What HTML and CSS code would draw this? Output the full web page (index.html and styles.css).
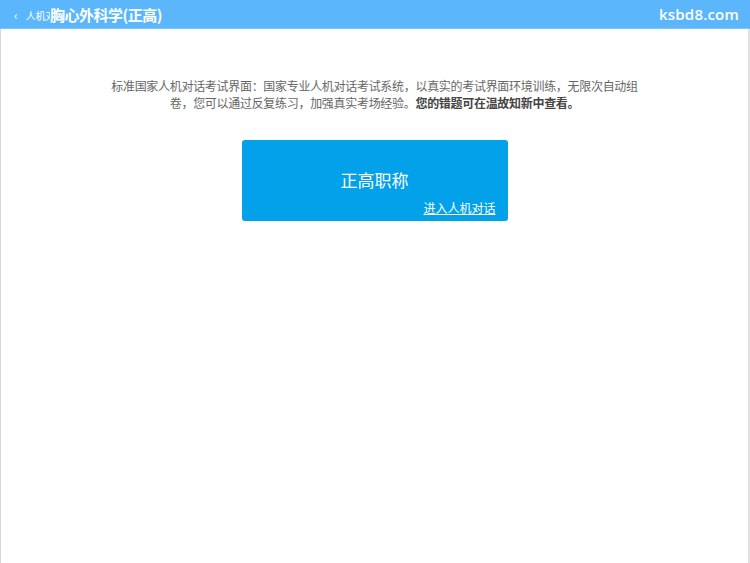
FILE: index.html
```html
<!DOCTYPE html>
<html lang="zh">
<head>
<meta charset="utf-8">
<title>胸心外科学(正高)</title>
<link rel="stylesheet" href="styles.css">
</head>
<body>
<div class="page">
  <header class="topbar">
    <div class="left">
      <span class="back"><span class="chev">‹</span>人机对</span><span class="title">胸心外科学(正高)</span>
    </div>
    <div class="site">ksbd8.com</div>
  </header>
  <main class="content">
    <p class="intro">标准国家人机对话考试界面：国家专业人机对话考试系统，以真实的考试界面环境训练，无限次自动组卷，您可以通过反复练习，加强真实考场经验。<b>您的错题可在温故知新中查看。</b></p>
    <div class="card">
      <div class="card-title">正高职称</div>
      <a class="card-link" href="#">进入人机对话</a>
    </div>
  </main>
</div>
</body>
</html>
```
FILE: styles.css
```css
html, body {
  margin: 0;
  padding: 0;
  background: #fff;
}
body {
  font-family: "Noto Sans CJK SC", "Liberation Sans", sans-serif;
}
.page {
  width: 750px;
  height: 563px;
  display: flex;
  flex-direction: column;
  overflow: hidden;
}
.topbar {
  height: 29px;
  flex: none;
  background: #5cb6fc;
  border-bottom: 1px solid #7cc4fd;
  box-sizing: border-box;
  display: flex;
  align-items: center;
  justify-content: space-between;
  padding: 0 11px 0 14px;
  color: #fff;
}
.left {
  display: flex;
  align-items: center;
}
.back {
  font-size: 10px;
  width: 36px;
  white-space: nowrap;
  overflow: hidden;
}
.chev {
  font-size: 12px;
  margin-right: 8px;
}
.title {
  font-size: 15px;
  font-weight: bold;
  letter-spacing: -0.5px;
}
.site {
  font-family: "Open Sans", "Liberation Sans", sans-serif;
  font-size: 15px;
  font-weight: 600;
  letter-spacing: 0.2px;
}
.content {
  flex: 1;
  border-left: 1px solid #d8d8d8;
  border-right: 2px solid #e0e0e0;
  display: flex;
  flex-direction: column;
  align-items: center;
  padding-top: 48px;
}
.intro {
  width: 530px;
  margin: 0;
  font-size: 12px;
  line-height: 17px;
  letter-spacing: -0.3px;
  color: #666;
  text-align: center;
}
.intro b {
  color: #444;
}
.card {
  margin-top: 29px;
  width: 266px;
  height: 81px;
  box-sizing: border-box;
  background: #03a1e9;
  border-radius: 3px;
  display: flex;
  flex-direction: column;
  align-items: flex-end;
  padding: 29px 12px 0 0;
  color: #fff;
}
.card-title {
  align-self: center;
  font-size: 17px;
  line-height: 22px;
  padding-left: 12px;
}
.card-link {
  margin-top: 9px;
  font-size: 12px;
  line-height: 16px;
  color: #fff;
  text-decoration: underline;
}
```
